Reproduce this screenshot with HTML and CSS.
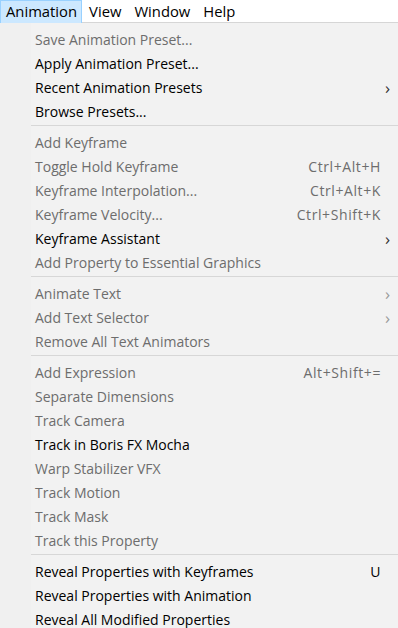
FILE: index.html
```html
<!DOCTYPE html>
<html lang="en">
<head>
  <meta charset="UTF-8" />
  <title>Animation menu</title>
  <link rel="stylesheet" href="styles.css">
</head>
<body>

  <div class="menubar">
    <div class="menubar-item open">Animation</div>
    <div class="menubar-item">View</div>
    <div class="menubar-item">Window</div>
    <div class="menubar-item">Help</div>
  </div>

  <div class="menu">
    <div class="item off"><span class="label">Save Animation Preset...</span></div>
    <div class="item"><span class="label">Apply Animation Preset...</span></div>
    <div class="item"><span class="label">Recent Animation Presets</span><span class="arrow">&#x203A;</span></div>
    <div class="item"><span class="label">Browse Presets...</span></div>
    <div class="sep"></div>
    <div class="item off"><span class="label">Add Keyframe</span></div>
    <div class="item off"><span class="label">Toggle Hold Keyframe</span><span class="keys">Ctrl+Alt+H</span></div>
    <div class="item off"><span class="label">Keyframe Interpolation...</span><span class="keys">Ctrl+Alt+K</span></div>
    <div class="item off"><span class="label">Keyframe Velocity...</span><span class="keys">Ctrl+Shift+K</span></div>
    <div class="item"><span class="label">Keyframe Assistant</span><span class="arrow">&#x203A;</span></div>
    <div class="item off"><span class="label">Add Property to Essential Graphics</span></div>
    <div class="sep"></div>
    <div class="item off"><span class="label">Animate Text</span><span class="arrow">&#x203A;</span></div>
    <div class="item off"><span class="label">Add Text Selector</span><span class="arrow">&#x203A;</span></div>
    <div class="item off"><span class="label">Remove All Text Animators</span></div>
    <div class="sep"></div>
    <div class="item off"><span class="label">Add Expression</span><span class="keys">Alt+Shift+=</span></div>
    <div class="item off"><span class="label">Separate Dimensions</span></div>
    <div class="item off"><span class="label">Track Camera</span></div>
    <div class="item"><span class="label">Track in Boris FX Mocha</span></div>
    <div class="item off"><span class="label">Warp Stabilizer VFX</span></div>
    <div class="item off"><span class="label">Track Motion</span></div>
    <div class="item off"><span class="label">Track Mask</span></div>
    <div class="item off"><span class="label">Track this Property</span></div>
    <div class="sep"></div>
    <div class="item"><span class="label">Reveal Properties with Keyframes</span><span class="keys">U</span></div>
    <div class="item"><span class="label">Reveal Properties with Animation</span></div>
    <div class="item"><span class="label">Reveal All Modified Properties</span></div>
  </div>

</body>
</html>
```

FILE: styles.css
```css
/* --- Page --- */
html, body {
  margin: 0;
  height: 100%;
}
body {
  font-family: 'Segoe UI', 'Open Sans', sans-serif;
  font-size: 14px;
  background: #f2f2f2;
  color: #000;
  overflow: hidden;
}

/* --- Menu bar --- */
.menubar {
  display: flex;
  height: 22px;
  background: #fff;
  border-bottom: 1px solid #d6d6d6;
}
.menubar-item {
  padding: 0 6px 0 7px;
  line-height: 22px;
  font-size: 14.8px;
}
.menubar-item.open {
  background: #cce8ff;
  border: 1px solid #99d1ff;
  border-bottom: none;
  line-height: 21px;
  padding: 0 4px 0 5px;
  margin-bottom: -1px;
  height: 22px;
}

/* --- Dropdown --- */
.menu {
  padding-top: 4px;
  background: linear-gradient(to right, #f0f0f0 31px, #f2f2f2 31px);
}
.item {
  display: flex;
  align-items: center;
  height: 24px;
  padding-left: 35px;
}
.item.off {
  color: #6d6d6d;
}
.label {
  flex: 1;
  white-space: nowrap;
}
.keys {
  width: 120px;
  text-align: right;
  padding-right: 17px;
  letter-spacing: 0.6px;
}
.arrow {
  width: 13px;
  margin-left: auto;
  font-size: 17px;
  line-height: 1;
  color: #333;
}
.item.off .arrow {
  color: #9a9a9a;
}
.sep {
  height: 7px;
  margin-left: 31px;
  background: linear-gradient(#d7d7d7, #d7d7d7) 0 2px / 100% 1px no-repeat;
}
```
